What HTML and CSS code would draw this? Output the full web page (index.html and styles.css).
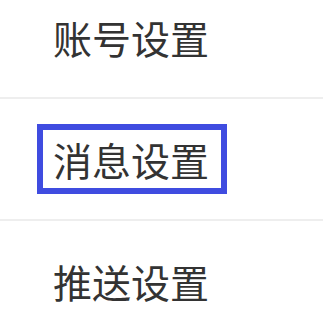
FILE: index.html
```html
<!DOCTYPE html>
<html lang="zh">
<head>
<meta charset="utf-8">
<link rel="stylesheet" href="styles.css">
</head>
<body>
<div class="list">
  <div class="row"><span class="label">账号设置</span></div>
  <div class="row"><span class="label focused">消息设置</span></div>
  <div class="row"><span class="label">推送设置</span></div>
</div>
</body>
</html>
```
FILE: styles.css
```css
html, body {
  margin: 0;
  padding: 0;
  background: #ffffff;
}
.list {
  margin-top: -23px;
  display: flex;
  flex-direction: column;
}
.row {
  height: 120px;
  border-bottom: 2px solid #eeeeee;
  display: flex;
  align-items: center;
  padding-left: 53px;
}
.label {
  font-family: "Noto Sans CJK SC", "Noto Sans", sans-serif;
  font-size: 39px;
  line-height: 39px;
  color: #333333;
}
.focused {
  border: 6px solid #3f4ce0;
  padding: 10px 12px 9px 10px;
  margin-left: -16px;
}
```
